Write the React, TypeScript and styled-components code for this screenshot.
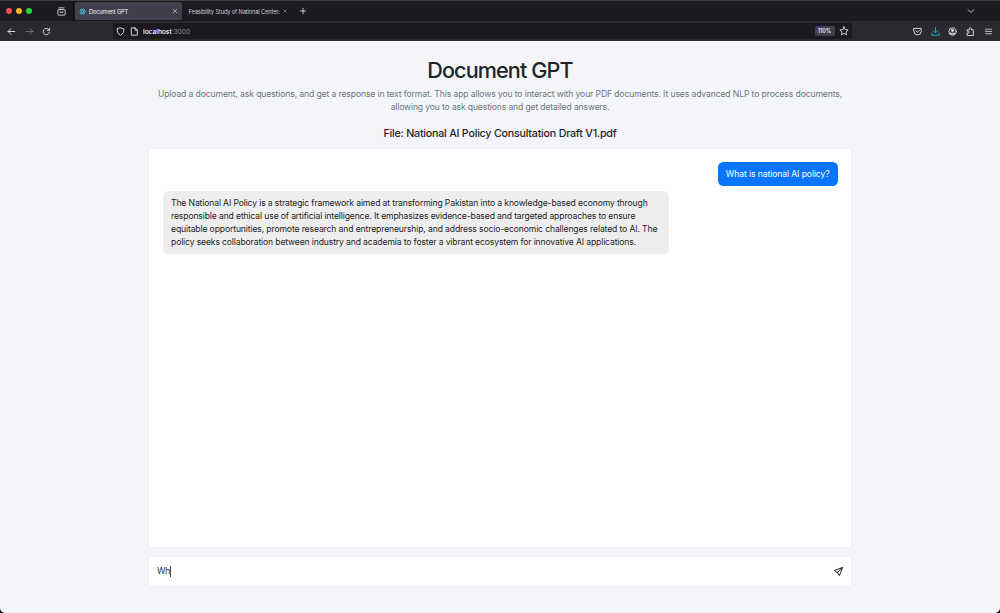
import React from 'react';
import styled, { createGlobalStyle } from 'styled-components';
import { BsSend } from 'react-icons/bs';

const Global = createGlobalStyle`
  * { box-sizing: border-box; }
  html, body { margin: 0; padding: 0; background: #000; }
  body { font-family: Inter, "Liberation Sans", sans-serif; overflow: hidden; }
  h1, h2, p { margin: 0; }
`;

const Window = styled.div`
  width: 1000px;
  height: 613px;
  display: flex;
  flex-direction: column;
  background: #f4f5f8;
  border-radius: 0 0 5px 5px;
  overflow: hidden;
`;

const TabStrip = styled.div`
  height: 21px;
  flex: none;
  display: flex;
  align-items: center;
  background: #1b1a20;
  border-top: 1px solid #3d3d42;
`;

const Lights = styled.div`
  display: flex;
  gap: 4px;
  padding-left: 6px;
  width: 57px;
`;

const Light = styled.i<{ $color: string }>`
  width: 6px;
  height: 6px;
  border-radius: 50%;
  background: ${(p) => p.$color};
`;

const Overview = styled.div`
  width: 17px;
  height: 20px;
  display: flex;
  align-items: center;
  border-right: 1px solid #0e0d12;
`;

const Tab = styled.div<{ $active?: boolean; $width: number }>`
  width: ${(p) => p.$width}px;
  height: 18px;
  margin-left: 1px;
  padding: 0 4px;
  display: flex;
  align-items: center;
  gap: 3px;
  border-radius: 2px;
  background: ${(p) => (p.$active ? '#413f4c' : 'transparent')};
  color: ${(p) => (p.$active ? '#f4f4f8' : '#c9c9cf')};
`;

const TabTitle = styled.span<{ $spacing: number }>`
  flex: 1;
  padding-top: 1px;
  white-space: nowrap;
  font-size: 5.7px;
  line-height: 10px;
  letter-spacing: ${(p) => p.$spacing}px;
`;

const Spacer = styled.div<{ $width?: number }>`
  flex: ${(p) => (p.$width ? `0 0 ${p.$width}px` : '1')};
`;

const Toolbar = styled.div`
  height: 20px;
  flex: none;
  display: flex;
  align-items: center;
  background: #2a2930;
`;

const NavButtons = styled.div`
  width: 113px;
  padding-left: 7px;
  display: flex;
  gap: 8.7px;
`;

const AddressBar = styled.div`
  width: 739px;
  height: 16px;
  padding: 0 3px;
  display: flex;
  align-items: center;
  gap: 4.5px;
  border-radius: 2px;
  background: #1b1a20;
`;

const Address = styled.span`
  flex: 1;
  padding-top: 1px;
  font-size: 6.7px;
  line-height: 12px;
  letter-spacing: -0.05px;
  color: #8f8f96;
  b { font-weight: 500; color: #fbfbfe; }
`;

const Zoom = styled.span`
  width: 20px;
  height: 10px;
  border-radius: 2px;
  background: #413f4c;
  color: #fbfbfe;
  font-size: 5.5px;
  font-weight: 500;
  line-height: 10px;
  text-align: center;
`;

const Actions = styled.div`
  flex: 1;
  display: flex;
  justify-content: flex-end;
  gap: 8.6px;
  padding-right: 7.5px;
`;

const Page = styled.main`
  flex: 1;
  width: 704px;
  margin: 0 auto;
  padding-top: 16px;
  display: flex;
  flex-direction: column;
`;

const Title = styled.h1`
  font-size: 21.6px;
  font-weight: 500;
  line-height: 26px;
  letter-spacing: -0.88px;
  text-align: center;
  color: #212529;
`;

const Line = styled.span<{ $spacing?: number }>`
  display: block;
  white-space: nowrap;
  letter-spacing: ${(p) => p.$spacing ?? 0}px;
`;

const Intro = styled.p`
  margin-top: 5px;
  font-size: 8.6px;
  line-height: 13.2px;
  text-align: center;
  color: #6c757d;
`;

const FileName = styled.h2`
  margin-top: 12.4px;
  font-size: 10.7px;
  font-weight: 500;
  line-height: 14px;
  letter-spacing: -0.22px;
  text-align: center;
  color: #212529;
`;

const Chat = styled.section`
  margin-top: 7.2px;
  height: 400px;
  padding: 13px 13.5px 13px 14px;
  display: flex;
  flex-direction: column;
  gap: 5.7px;
  background: #fff;
  border: 1px solid #eff0f3;
  border-radius: 3px;
`;

const Message = styled.div<{ $own?: boolean }>`
  align-self: ${(p) => (p.$own ? 'flex-end' : 'flex-start')};
  width: ${(p) => (p.$own ? 119.7 : 506)}px;
  padding: ${(p) => (p.$own ? '6.1px 8px 4.5px' : '5.8px 8px 4.2px')};
  border-radius: 5.5px;
  font-size: 8.6px;
  line-height: 13.1px;
  background: ${(p) => (p.$own ? '#0a74fb' : '#eee')};
  color: ${(p) => (p.$own ? '#fff' : '#1c1d1f')};
`;

const Composer = styled.div`
  margin-top: 8px;
  height: 31px;
  padding: 0 8px;
  display: flex;
  align-items: center;
  background: #fff;
  border: 1px solid #eff0f3;
  border-radius: 3px;
  font-size: 8.6px;
  letter-spacing: -0.1px;
  color: #212529;
`;

const Caret = styled.i`
  width: 1px;
  height: 11px;
  background: #444;
`;

const SendIcon = styled(BsSend)`
  width: 9px;
  height: 9px;
  color: #212529;
  stroke: #212529;
  stroke-width: 0.6px;
`;

type IconProps = { size?: number; color?: string; width?: number; children: React.ReactNode };
const Icon = ({ size = 8, color = '#e6e6eb', width = 1.6, children }: IconProps) => (
  <svg width={size} height={size} viewBox="0 0 16 16" fill="none" stroke={color}
    strokeWidth={width} strokeLinecap="round" strokeLinejoin="round">{children}</svg>
);

const Close = () => <Icon size={6}><path d="M3 3l10 10M13 3L3 13" /></Icon>;

export default function App() {
  return (
    <>
      <Global />
      <Window>
        <TabStrip>
          <Lights>
            <Light $color="#fe4b55" /><Light $color="#fdb527" /><Light $color="#2bd53f" />
          </Lights>
          <Overview>
            <Icon size={9} width={1.5}><path d="M3.5 1.5h9" /><rect x="1.5" y="4.5" width="13" height="10" rx="2" /><path d="M5.5 8.5v1h5v-1" /></Icon>
          </Overview>
          <Tab $active $width={107}>
            <Icon size={7} color="#4fc3dc" width={1.3}>
              <ellipse cx="8" cy="8" rx="7" ry="2.8" />
              <ellipse cx="8" cy="8" rx="7" ry="2.8" transform="rotate(60 8 8)" />
              <ellipse cx="8" cy="8" rx="7" ry="2.8" transform="rotate(120 8 8)" />
            </Icon>
            <TabTitle $spacing={-0.14}>Document GPT</TabTitle>
            <Close />
          </Tab>
          <Spacer $width={1.5} />
          <Tab $width={106.5}>
            <TabTitle $spacing={-0.13}>Feasibility Study of National Center:</TabTitle>
            <Close />
          </Tab>
          <Spacer $width={8} />
          <Icon><path d="M8 2.5v11M2.5 8h11" /></Icon>
          <Spacer />
          <Icon><path d="M2.5 5.5L8 11l5.5-5.5" /></Icon>
          <Spacer $width={25} />
        </TabStrip>
        <Toolbar>
          <NavButtons>
            <Icon size={9}><path d="M14 8H2M7 3L2 8l5 5" /></Icon>
            <Icon size={9} color="#74737b"><path d="M2 8h12M9 3l5 5-5 5" /></Icon>
            <Icon size={9}><path d="M13.5 9A5.7 5.7 0 1 1 12 4.2M13.5 2v4h-4" /></Icon>
          </NavButtons>
          <AddressBar>
            <Icon size={9}><path d="M8 1.5l6 2c0 5-1 9-6 11-5-2-6-6-6-11z" /></Icon>
            <Icon size={9}><path d="M3 1.5h6l4 4v9H3zM9 1.5v4h4" /></Icon>
            <Address><b>localhost</b>:3000</Address>
            <Zoom>110%</Zoom>
            <Icon size={10} width={1.4}><path d="M8 1.5l2 4.2 4.6.6-3.4 3.2.9 4.6L8 11.9l-4.1 2.2.9-4.6L1.4 6.3 6 5.7z" /></Icon>
          </AddressBar>
          <Actions>
            <Icon size={9}><path d="M1.5 2.5h13V8a6.5 6 0 0 1-13 0zM5 6.5l3 3 3-3" /></Icon>
            <Icon size={9} color="#16b8c4"><path d="M8 1v9M4.5 7L8 10.5 11.5 7M1.5 11v3.5h13V11" /></Icon>
            <Icon size={9}><circle cx="8" cy="8" r="6.5" /><circle cx="8" cy="6" r="2" fill="#e6e6eb" /><path d="M4.5 11h7v1.5h-7z" /></Icon>
            <Icon size={9}><path d="M2 14.5v-4h2a1.5 1.5 0 0 0 0-3H2V5h4V3a1.8 1.8 0 0 1 3.6 0v2H13v9.5z" /></Icon>
            <Icon size={9} color="#c4c4ca"><path d="M2.5 4h11M2.5 8h11M2.5 12h11" /></Icon>
          </Actions>
        </Toolbar>
        <Page>
          <Title>Document GPT</Title>
          <Intro>
            <Line $spacing={-0.117}>Upload a document, ask questions, and get a response in text format. This app allows you to interact with your PDF documents. It uses advanced NLP to process documents,</Line>
            <Line $spacing={-0.14}>allowing you to ask questions and get detailed answers.</Line>
          </Intro>
          <FileName>File: National AI Policy Consultation Draft V1.pdf</FileName>
          <Chat>
            <Message $own><Line $spacing={-0.09}>What is national AI policy?</Line></Message>
            <Message>
              <Line $spacing={-0.13}>The National AI Policy is a strategic framework aimed at transforming Pakistan into a knowledge-based economy through</Line>
              <Line $spacing={-0.13}>responsible and ethical use of artificial intelligence. It emphasizes evidence-based and targeted approaches to ensure</Line>
              <Line $spacing={-0.126}>equitable opportunities, promote research and entrepreneurship, and address socio-economic challenges related to AI. The</Line>
              <Line $spacing={-0.133}>policy seeks collaboration between industry and academia to foster a vibrant ecosystem for innovative AI applications.</Line>
            </Message>
          </Chat>
          <Composer>
            <span>Wh</span><Caret />
            <Spacer />
            <SendIcon />
          </Composer>
        </Page>
      </Window>
    </>
  );
}
